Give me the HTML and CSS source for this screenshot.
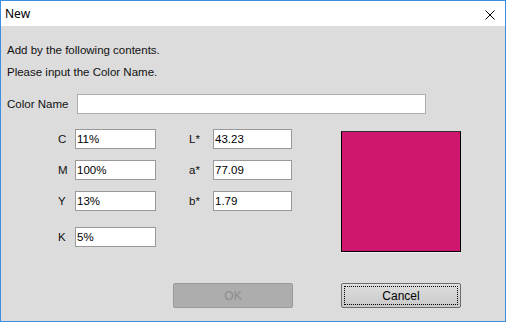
FILE: index.html
```html
<!DOCTYPE html>
<html>
<head>
    <meta charset="UTF-8">
    <title>New</title>
    <link rel="stylesheet" href="styles.css">
</head>
<body>
    <div class="window">
        <!-- タイトルバー -->
        <div class="titlebar">
            <span class="title">New</span>
            <svg class="close" width="10" height="10" viewBox="0 0 10 10">
                <path d="M0.5 0.5 L9.5 9.5 M9.5 0.5 L0.5 9.5" stroke="#000" stroke-width="1"/>
            </svg>
        </div>

        <!-- 本体 -->
        <div class="dialog">
            <p class="line">Add by the following contents.</p>
            <p class="line second">Please input the Color Name.</p>

            <div class="name-row">
                <label class="name-label">Color Name</label>
                <input class="name-input" type="text" value="">
            </div>

            <div class="color-grid">
                <span class="lbl">C</span>
                <input class="field" type="text" value="11%">
                <span class="lbl lab">L*</span>
                <input class="field lab-field" type="text" value="43.23">

                <span class="lbl">M</span>
                <input class="field" type="text" value="100%">
                <span class="lbl lab">a*</span>
                <input class="field lab-field" type="text" value="77.09">

                <span class="lbl">Y</span>
                <input class="field" type="text" value="13%">
                <span class="lbl lab">b*</span>
                <input class="field lab-field" type="text" value="1.79">

                <span class="lbl k-row">K</span>
                <input class="field k-row" type="text" value="5%">

                <div class="swatch" style="background: #d0166f;"></div>
            </div>

            <div class="buttons">
                <button class="btn btn-ok" disabled>OK</button>
                <button class="btn btn-cancel">Cancel</button>
            </div>
        </div>
    </div>
</body>
</html>
```

FILE: styles.css
```css
/* ダイアログ全体 */
body {
    margin: 0;
    padding: 0;
    font-family: "Liberation Sans", Arial, sans-serif;
    font-size: 11.5px;
    background: #dcdcdc;
}

.window {
    width: 506px;
    height: 322px;
    box-sizing: border-box;
    border: 1px solid #3b8fe2;
    display: flex;
    flex-direction: column;
}

/* タイトルバー */
.titlebar {
    height: 25px;
    flex: none;
    background: #fff;
    display: flex;
    align-items: center;
    justify-content: space-between;
    padding: 0 10px 0 4px;
}

.title {
    font-family: "Noto Sans", "Liberation Sans", sans-serif;
    font-size: 12px;
    line-height: 14px;
    color: #000;
}

.close {
    display: block;
    margin-top: 2px;
}

/* 本体 */
.dialog {
    flex: 1;
    background: #dcdcdc;
    padding: 17px 0 0 6px;
    color: #111;
}

.line {
    margin: 0;
    line-height: 14px;
}

.line.second {
    margin-top: 8px;
}

.name-row {
    display: flex;
    align-items: center;
    margin-top: 15px;
}

.name-label {
    width: 70px;
    line-height: 14px;
}

.name-input {
    width: 349px;
    height: 20px;
    box-sizing: border-box;
    border: 1px solid #adadad;
    background: #fff;
    margin: 0;
    padding: 0 2px;
    font: inherit;
}

/* CMYK / Lab */
.color-grid {
    display: grid;
    grid-template-columns: 18px 81px 32px 25px 79px 49px 120px;
    grid-template-rows: 20px 20px 20px 25px;
    row-gap: 11px;
    margin: 15px 0 0 50px;
    align-items: center;
}

.lbl {
    grid-column: 1;
    line-height: 14px;
    padding-left: 1px;
}

.field {
    grid-column: 2;
    width: 81px;
    height: 20px;
    box-sizing: border-box;
    border: 1px solid #999;
    background: #fff;
    margin: 0;
    padding: 0 1px;
    font: inherit;
    color: #000;
}

.lbl.lab {
    grid-column: 4;
}

.field.lab-field {
    grid-column: 5;
    width: 79px;
}

.k-row {
    align-self: end;
}

.lbl.k-row {
    margin-bottom: 3px;
}

.swatch {
    grid-column: 7;
    grid-row: 1 / span 4;
    align-self: start;
    width: 120px;
    height: 121px;
    box-sizing: border-box;
    margin-top: 2px;
    border: 1px solid #000;
    border-top-color: #333;
    box-shadow: 0 1px 0 #f0f0f0;
}

/* ボタン */
.buttons {
    display: flex;
    gap: 48px;
    margin: 36px 0 0 166px;
}

.btn {
    width: 120px;
    height: 25px;
    box-sizing: border-box;
    border-radius: 2px;
    font-family: "Liberation Sans", Arial, sans-serif;
    font-size: 12px;
    padding: 0;
}

.btn-ok {
    background: #adadad;
    border: 1px solid #999;
    color: #8c8c8c;
}

.btn-cancel {
    background: linear-gradient(#dedede, #c9c9c9);
    border: 1px solid #6d6d6d;
    color: #000;
    outline: 1px dotted #000;
    outline-offset: -4px;
}
```
